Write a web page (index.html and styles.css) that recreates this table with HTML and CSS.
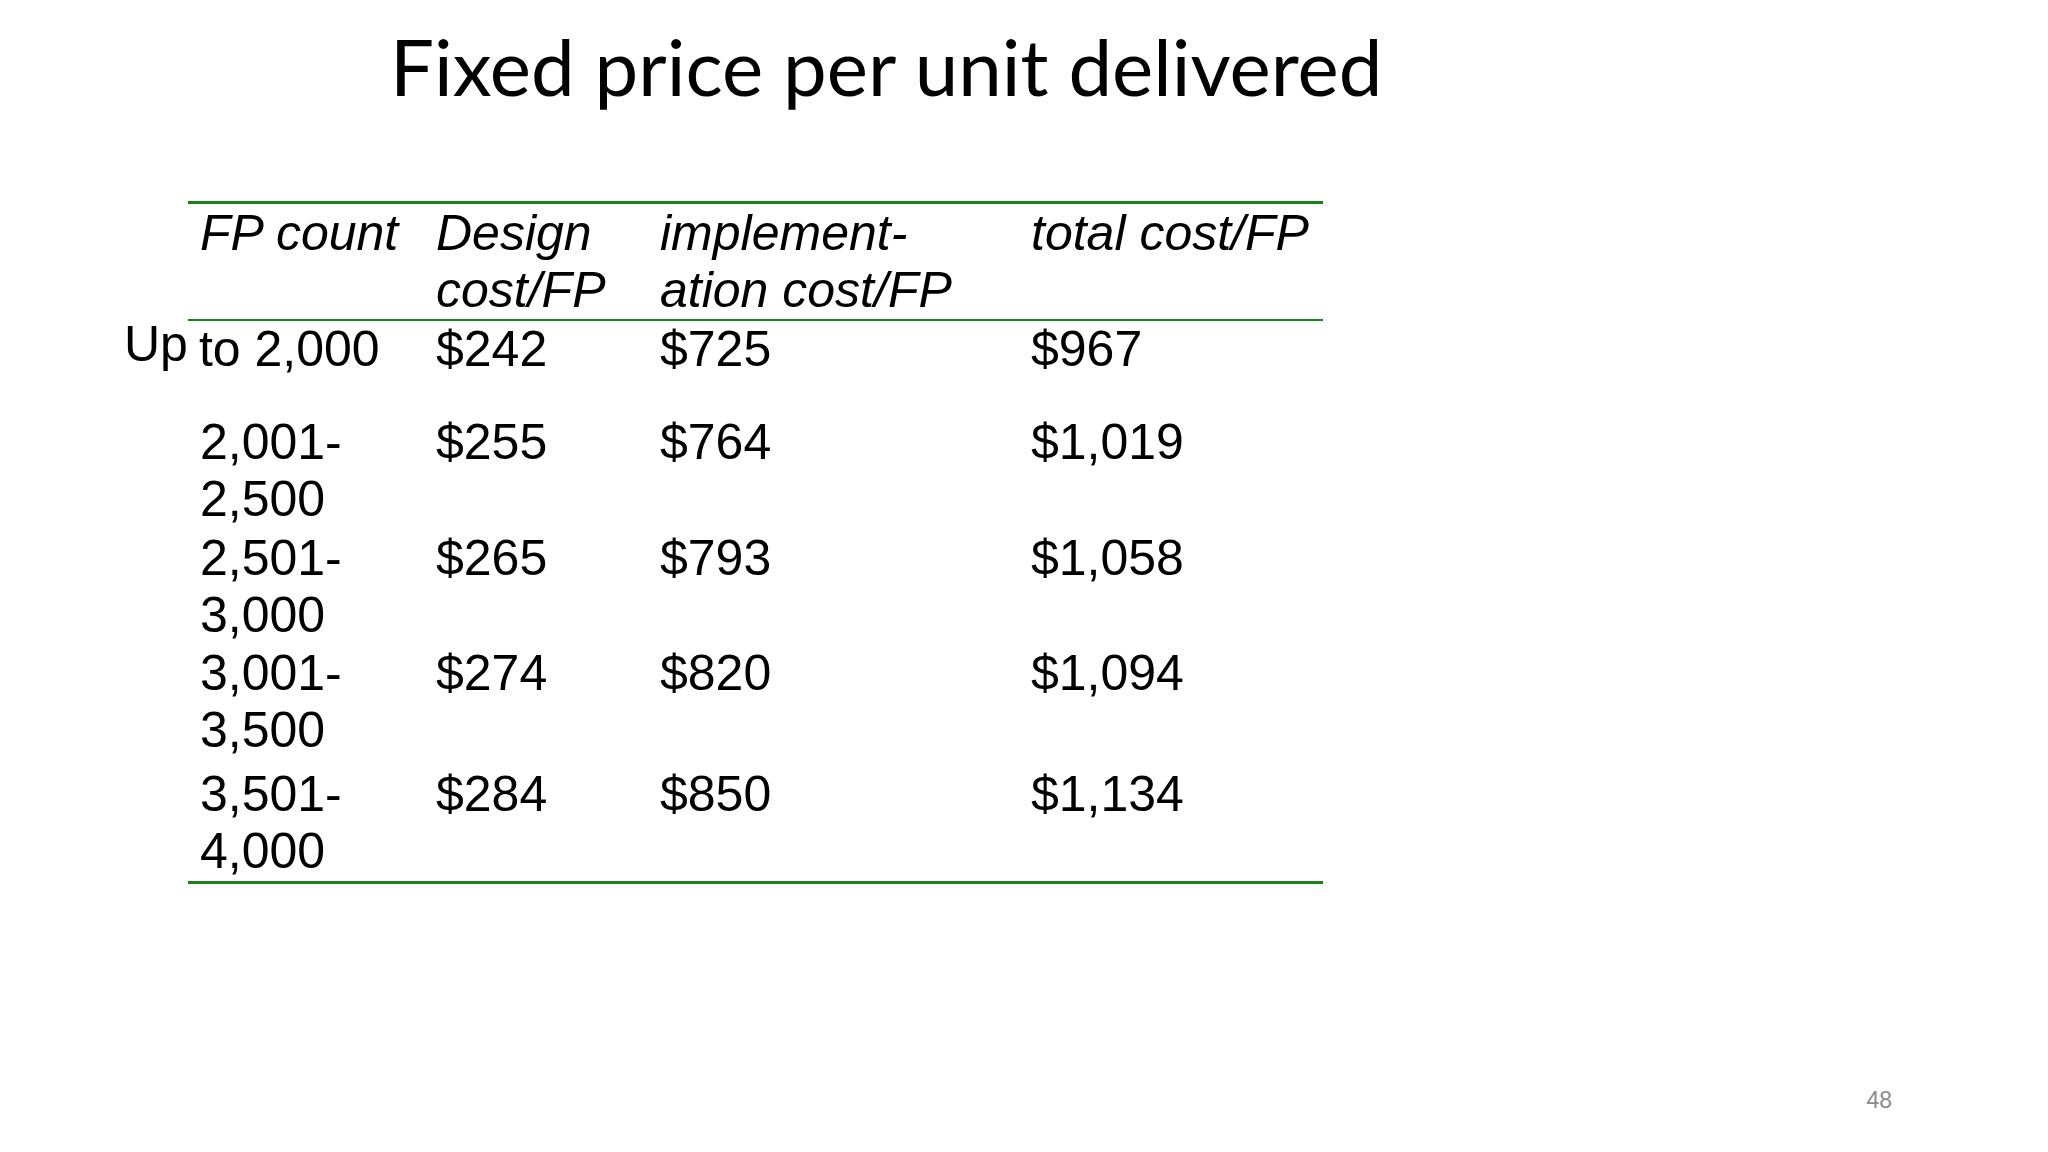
FILE: index.html
```html
<!DOCTYPE html>
<html lang="en">
<head>
<meta charset="utf-8">
<title>Fixed price per unit delivered</title>
<link rel="stylesheet" href="styles.css">
</head>
<body>
<div class="slide">
  <h1 class="title">Fixed price per unit delivered</h1>
  <div class="table">
    <div class="row head">
      <div class="cell">FP count</div>
      <div class="cell">Design cost/FP</div>
      <div class="cell">implement-<br>ation cost/FP</div>
      <div class="cell">total cost/FP</div>
    </div>
    <div class="row r1">
      <div class="cell"><span class="up">Up</span>to 2,000</div>
      <div class="cell">$242</div>
      <div class="cell">$725</div>
      <div class="cell">$967</div>
    </div>
    <div class="row r2">
      <div class="cell">2,001-<br>2,500</div>
      <div class="cell">$255</div>
      <div class="cell">$764</div>
      <div class="cell">$1,019</div>
    </div>
    <div class="row r3">
      <div class="cell">2,501-<br>3,000</div>
      <div class="cell">$265</div>
      <div class="cell">$793</div>
      <div class="cell">$1,058</div>
    </div>
    <div class="row r4">
      <div class="cell">3,001-<br>3,500</div>
      <div class="cell">$274</div>
      <div class="cell">$820</div>
      <div class="cell">$1,094</div>
    </div>
    <div class="row r5">
      <div class="cell">3,501-<br>4,000</div>
      <div class="cell">$284</div>
      <div class="cell">$850</div>
      <div class="cell">$1,134</div>
    </div>
  </div>
  <div class="footer"><span class="page-num">48</span></div>
</div>
</body>
</html>
```

FILE: styles.css
```css
html, body {
  margin: 0;
  padding: 0;
  background: #ffffff;
}

.slide {
  width: 2048px;
  height: 1152px;
  display: flex;
  flex-direction: column;
  background: #ffffff;
  color: #000000;
  overflow: hidden;
}

.title {
  margin: 0;
  padding: 27px 0 0 390px;
  font-family: "Lato", "Open Sans", sans-serif;
  font-weight: 400;
  font-size: 78px;
  line-height: 78px;
  color: #000000;
  white-space: nowrap;
}

.table {
  margin: 96px 0 0 188px;
  width: 1135px;
  border-top: 3px solid #178317;
  border-bottom: 3px solid #178317;
  font-family: "Liberation Sans", Arial, sans-serif;
  font-size: 50px;
  line-height: 57px;
}

.row {
  display: grid;
  grid-template-columns: 236px 224px 371px 304px;
  align-items: start;
}

.cell {
  padding-left: 12px;
  white-space: nowrap;
}

.head {
  font-style: italic;
  height: 114px;
  padding-top: 1px;
  border-bottom: 2px solid #178317;
}

.head .cell {
  white-space: normal;
}

.r1 { height: 93px; }
.r2 { height: 116px; }
.r3 { height: 115px; }
.r4 { height: 121px; }
.r5 { height: 115px; }

.up {
  margin-left: -76px;
  margin-right: 11px;
  line-height: 0;
  vertical-align: 5px;
}

.footer {
  margin-top: auto;
  display: flex;
  justify-content: flex-end;
  padding: 0 156px 40px 0;
}

.page-num {
  font-family: "Liberation Sans", Arial, sans-serif;
  font-size: 23px;
  line-height: 24px;
  color: #8b8b8b;
}
```
